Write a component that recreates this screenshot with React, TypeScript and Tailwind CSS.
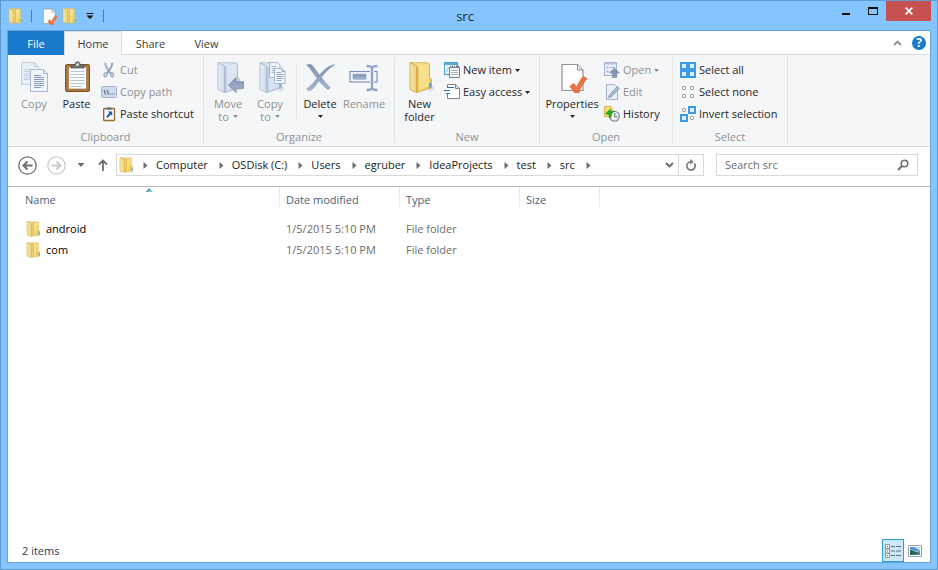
import type { ReactNode } from "react";

type IconProps = { className?: string };

const BREADCRUMBS = [
  "Computer",
  "OSDisk (C:)",
  "Users",
  "egruber",
  "IdeaProjects",
  "test",
  "src",
];

const FILES = [
  { name: "android", modified: "1/5/2015 5:10 PM", type: "File folder" },
  { name: "com", modified: "1/5/2015 5:10 PM", type: "File folder" },
];

/* ---------- icons ---------- */

function Gradients() {
  return (
    <svg className="absolute h-0 w-0" aria-hidden="true">
      <defs>
        <linearGradient id="gold" x1="0" y1="0" x2="1" y2="1">
          <stop offset="0" stopColor="#f9e7a0" />
          <stop offset="0.6" stopColor="#f3d974" />
          <stop offset="1" stopColor="#e0b53c" />
        </linearGradient>
        <linearGradient id="goldLeaf" x1="0" y1="0" x2="1" y2="0">
          <stop offset="0" stopColor="#f9e9a8" />
          <stop offset="1" stopColor="#ecd079" />
        </linearGradient>
        <linearGradient id="ice" x1="0" y1="0" x2="1" y2="1">
          <stop offset="0" stopColor="#eaf0f8" />
          <stop offset="1" stopColor="#b9c9e0" />
        </linearGradient>
        <linearGradient id="iceLeaf" x1="0" y1="0" x2="1" y2="0">
          <stop offset="0" stopColor="#ecf2fa" />
          <stop offset="1" stopColor="#cbd8e9" />
        </linearGradient>
        <linearGradient id="steel" x1="0" y1="0" x2="0" y2="1">
          <stop offset="0" stopColor="#8193b3" />
          <stop offset="1" stopColor="#a9b8d2" />
        </linearGradient>
      </defs>
    </svg>
  );
}

function SmallFolderIcon({ className = "h-4 w-4" }: IconProps) {
  return (
    <svg viewBox="0 0 16 16" className={className} aria-hidden="true">
      <path d="M1 .8h11.300v8l1.400.7v4.300l-1.200 1H6z" fill="#f1da85" stroke="#dcbb58" strokeWidth=".6" />
      <path d="m8 2.500 4-1v12l-4 1.500z" fill="url(#gold)" />
      <path d="m1 .8 4.700 1.800v13L1 14z" fill="url(#goldLeaf)" stroke="#d8b553" strokeWidth=".6" />
      <path d="M5.700 2.600 8 2v12.800l-2.300.8z" fill="#dcb447" />
      <path d="M6.800 3v11.500" stroke="#f6e39a" strokeWidth=".8" />
      <path d="M12.700 10.800h1v3l-1 .6z" fill="#4aa3e8" />
    </svg>
  );
}

function FolderIcon({ cold = false }: { cold?: boolean }) {
  const edge = cold ? "#a9b8d2" : "#d3aa45";
  return (
    <svg viewBox="0 0 32 32" className="h-8 w-8" aria-hidden="true">
      <path d="m24 31 6-2v-3l-3-3z" fill="#888" opacity=".2" />
      <path
        d="M6 1.800h16.500q3 0 3 2.500V16l2 2.500v8L13 31.500z"
        fill={cold ? "url(#ice)" : "url(#gold)"}
        stroke={edge}
        strokeWidth=".9"
      />
      <path
        d="M14 6.500 20 3.500q2.500-.5 4.500 0l.5 22-11 5z"
        fill={cold ? "#dfe8f4" : "#f8e391"}
        opacity=".75"
      />
      <path
        d="m6 1.800 6.500 3V31.500L6 28.500z"
        fill={cold ? "url(#iceLeaf)" : "url(#goldLeaf)"}
        stroke={edge}
        strokeWidth=".9"
      />
      <path d="m12.800 5 1.700 1.500v23.500l-1.700 1.300z" fill={cold ? "#b5c4dc" : "#dcb447"} />
      <path d="M25.300 22h1.700v4l-1.700 2z" fill={cold ? "#8fabd3" : "#3f9ce5"} />
    </svg>
  );
}

function MoveToIcon() {
  return (
    <span className="relative block h-8 w-8">
      <FolderIcon cold />
      <svg viewBox="0 0 32 32" className="absolute inset-0 h-8 w-8" aria-hidden="true">
        <path
          d="m16.500 24 7.500-7.500v4.300h7.500v6.500H24v4.300z"
          fill="url(#steel)"
          stroke="#73829f"
          strokeWidth=".8"
        />
      </svg>
    </span>
  );
}

function CopyToIcon() {
  return (
    <span className="relative block h-8 w-8">
      <FolderIcon cold />
      <svg viewBox="0 0 32 32" className="absolute inset-0 h-8 w-8" aria-hidden="true">
        <path d="M15.500 1.500h7.500l3 3v12H15.500z" fill="#f3f7fc" stroke="#a3b4d0" />
        <path d="M17.500 5.500h5m-5 2h5m-5 2h5m-5 2h5" stroke="#a3b4d0" />
        <path d="M20.500 7.500h7.500l3 3v12H20.500z" fill="#f5f8fd" stroke="#a3b4d0" />
        <path d="M28 7.500v3h3M22.500 11.500h5m-5 2h7m-7 2h7m-7 2h7m-7 2h5" fill="none" stroke="#93a7c9" />
      </svg>
    </span>
  );
}

function CopyIcon() {
  return (
    <svg viewBox="0 0 32 32" className="h-8 w-8" aria-hidden="true" fill="none">
      <path d="M3.500 1.500h13l4 4v18h-17z" fill="#eaf0f9" stroke="#c0cce0" />
      <path d="M16.500 1.500v4h4M6 8.500h9m-9 2h9m-9 2h9m-9 2h9m-9 2h9m-9 2h9" stroke="#c0cce0" />
      <path d="M12.500 8.500h13l4 4v18h-17z" fill="#f0f5fc" stroke="#a9b8d1" />
      <path d="M25.500 8.500v4h4" stroke="#a9b8d1" />
      <path d="M16 14.500h7m-7 2h10m-10 2h10m-10 2h10m-10 2h10m-10 2h10m-10 2h7" stroke="#8a9dc0" />
    </svg>
  );
}

function PasteIcon() {
  return (
    <svg viewBox="0 0 32 32" className="h-8 w-8" aria-hidden="true" fill="none">
      <rect x="4.500" y="3.500" width="24" height="27" rx="1.500" fill="#b0783a" stroke="#815121" />
      <path d="M7.500 6h18v22h-18z" fill="#fbfcfd" stroke="#8c6a41" strokeWidth=".6" />
      <path d="M9.500 10.500h14m-14 3h14m-14 3h14m-14 3h14m-14 3h14m-14 3h11" stroke="#b6c4d3" />
      <path d="M10 7V5l4-1.500C14 1.800 15 .8 16.500.8s2.500 1 2.500 2.700L23 5v2z" fill="#72777c" stroke="#45494d" strokeWidth=".7" />
      <circle cx="16.500" cy="3.500" r="1.300" fill="#f5f6f7" />
    </svg>
  );
}

function CutIcon() {
  return (
    <svg viewBox="0 0 16 16" className="h-4 w-4" aria-hidden="true" fill="none">
      <path d="M4.500.8C4 3 5 5 6.500 7l3 4.500" stroke="#a2b0c9" strokeWidth="2" />
      <path d="M11 .8c.5 2.200-.5 4.200-2 6.200l-3 4.500" stroke="#8899b8" strokeWidth="1.800" />
      <ellipse cx="4.500" cy="12.800" rx="1.300" ry="2" transform="rotate(20 4.500 12.800)" stroke="#9aabc8" strokeWidth="1.500" />
      <ellipse cx="11" cy="12.800" rx="1.300" ry="2" transform="rotate(-20 11 12.800)" stroke="#9aabc8" strokeWidth="1.500" />
    </svg>
  );
}

function CopyPathIcon() {
  return (
    <svg viewBox="0 0 16 16" className="h-4 w-4" aria-hidden="true" fill="none">
      <rect x=".5" y="2.500" width="15" height="11" rx="1" fill="#cfdbed" stroke="#a2b2cd" />
      <path d="m3 6 1.500 4.500M6 6l1.500 4.500" stroke="#5d7096" strokeWidth="1.200" />
      <path d="M9 9.500h1v1H9zm2 0h1v1h-1zm2 0h1v1h-1z" fill="#5d7096" />
    </svg>
  );
}

function PasteShortcutIcon() {
  return (
    <svg viewBox="0 0 16 16" className="h-4 w-4" aria-hidden="true" fill="none">
      <rect x="2.700" y="2.500" width="10.800" height="12" rx=".8" fill="#fff" stroke="#9a6a33" strokeWidth="1.400" />
      <path d="M5 3.800V2l2-.5c0-.8 2-.8 2 0l2 .5v1.800z" fill="#777" />
      <path d="M6.800 5.500h4.400v4.400L9.700 8.500 7 12 5.200 10.500 8.200 7.100z" fill="#1f5fb0" />
    </svg>
  );
}

function DeleteIcon() {
  return (
    <svg viewBox="0 0 32 32" className="h-8 w-8" aria-hidden="true" fill="url(#steel)" stroke="#7f90ae" strokeWidth=".5">
      <path d="M2.500 4.200C4.500 3 7 3 8.500 4.800 14 11.500 19 19.500 26.300 26.800l-2.300 2C16.500 23 11 14.500 6.500 8 5.300 6.300 4.200 5 2.500 4.200z" />
      <path d="M30.800 3.800C24.500 4.300 19 9.500 14.500 15.500 11 20 7.500 24.500 3 27.800c.3 1.500 1.500 2.200 3.200 1.700C10 28 13 22.500 16.500 17.500 20.500 12 25 7 30.800 3.800z" />
    </svg>
  );
}

function RenameIcon() {
  return (
    <svg viewBox="0 0 32 32" className="h-8 w-8" aria-hidden="true" fill="none">
      <rect x="2" y="10.500" width="27" height="10.500" fill="#f3f7fd" stroke="#8195b9" strokeWidth="1.200" />
      <path d="M5 13.200h13v5H5z" fill="url(#steel)" stroke="#8093b5" strokeWidth=".6" />
      <path
        d="M18.500 5c3.500 0 5 .5 5.500 2 .5-1.500 2-2 5.500-2M18.500 29c3.500 0 5-.5 5.500-2 .5 1.500 2 2 5.500 2M24 6.500v21"
        stroke="#f5f8fc"
        strokeWidth="4"
      />
      <path
        d="M18.500 5c3.500 0 5 .5 5.500 2 .5-1.500 2-2 5.500-2M18.500 29c3.500 0 5-.5 5.500-2 .5 1.500 2 2 5.500 2M24 6.500v21"
        stroke="#94a5c3"
        strokeWidth="2.400"
      />
    </svg>
  );
}

function PropertiesIcon({ className = "h-8 w-8" }: IconProps) {
  return (
    <svg viewBox="0 0 32 32" className={className} aria-hidden="true">
      <path d="M6 3.500h15.500l5.500 5.500v20.500H6z" fill="#fdfdfd" stroke="#8f9499" strokeWidth="1.200" />
      <path d="M21.500 3.500V9H27" fill="#e4e6e8" stroke="#8f9499" />
      <path
        d="m14 25.500 3.500-3 3.300 3.500c1.500-4 3.700-7.500 6.700-10.500l3.500 2.300c-4 4-6.500 8.200-8 13.700h-4.500z"
        fill="#ee7440"
        stroke="#d8602c"
        strokeWidth=".8"
      />
    </svg>
  );
}

function NewItemIcon() {
  return (
    <svg viewBox="0 0 16 16" className="h-4 w-4" aria-hidden="true" fill="none">
      <rect x=".5" y=".5" width="13" height="12" fill="#eaf5fd" stroke="#4e9fd2" />
      <path d="M1 1h12v2H1z" fill="#5aaade" />
      <path d="M2 10.500c1-3 2-4 3-5" stroke="#78b9e2" />
      <path d="M5.500 5.500h10v10h-10z" fill="#fff" stroke="#777d83" />
      <path d="M6.500 3.500v2m2-2v2m2-2v2m2-2v2m2-2v2" stroke="#777d83" />
      <path d="M7 8.500h7m-7 2h7m-7 2h7" stroke="#a9b0b7" />
    </svg>
  );
}

function EasyAccessIcon() {
  return (
    <svg viewBox="0 0 16 16" className="h-4 w-4" aria-hidden="true" fill="none">
      <path d="M3.500.5h8l4 4v10h-12z" fill="#fff" />
      <path d="M3.500 3V.5h8l4 4v10h-12V10M11.500.5v4h4" stroke="#7e8489" />
      <path d="M3 3.500h7M0 6.500h6M2 9.500h4" stroke="#2e67b1" strokeWidth="1.200" />
    </svg>
  );
}

function OpenIcon() {
  return (
    <svg viewBox="0 0 16 16" className="h-4 w-4" aria-hidden="true" fill="none">
      <rect x=".5" y=".5" width="12" height="13" fill="#e9f0f9" stroke="#a5b5cf" />
      <path d="M1 1h11v1.500H1z" fill="#b8c6dc" />
      <path d="M2.500 4.500h2v2h-2zm0 4h2v2h-2z" fill="#a5b5cf" />
      <path d="M6 5.500h5m-5 4h2" stroke="#a5b5cf" />
      <path d="m10.500 6 5 5h-2.800v4.500H8.300V11H5.500z" fill="#8494b1" stroke="#7384a3" strokeWidth=".5" />
    </svg>
  );
}

function EditIcon() {
  return (
    <svg viewBox="0 0 16 16" className="h-4 w-4" aria-hidden="true" fill="none">
      <path d="M2.500.5h8l3 3v12h-11z" fill="#e9f0f9" stroke="#a5b5cf" />
      <path d="m4.500 14 1-3.200 7.800-8.300 2 1.800-7.800 8.400z" fill="#a9bad5" stroke="#8092b3" strokeWidth=".8" />
    </svg>
  );
}

function HistoryIcon() {
  return (
    <svg viewBox="0 0 16 16" className="h-4 w-4" aria-hidden="true" fill="none">
      <path d="M.5.500h6.500l1 1v9H.500z" fill="#f7dc78" stroke="#d9b04a" />
      <circle cx="10.500" cy="10.300" r="4.900" fill="#eef3f8" stroke="#858b92" strokeWidth="1.200" />
      <path d="M10.700 7v3.800h3" stroke="#666c73" />
      <path d="M1.500 7.500 6.500 3v2.500c1.500-.8 3-.8 4 0-2 .5-3.200 2-3.500 6L5.500 12V9.500z" fill="#2fae28" stroke="#168a17" strokeWidth=".5" />
    </svg>
  );
}

const TILES = [
  [0, 0],
  [8, 0],
  [0, 8],
  [8, 8],
];

function TilesIcon({ selected }: { selected: boolean[] }) {
  return (
    <svg viewBox="0 0 16 16" className="h-4 w-4" aria-hidden="true" fill="none">
      {TILES.map(([x, y], i) =>
        selected[i] ? (
          <g key={i}>
            <rect x={x} y={y} width="8" height="8" fill="#3d9be9" />
            <rect x={x + 2} y={y + 2} width="4" height="4" fill="#dceefc" />
          </g>
        ) : (
          <rect key={i} x={x + 2.5} y={y + 2.5} width="3" height="3" rx=".5" fill="#fff" stroke="#9c9fa2" />
        ),
      )}
    </svg>
  );
}

function Caret({ className = "" }: IconProps) {
  return (
    <svg viewBox="0 0 5 3" className={`h-[3px] w-[5px] shrink-0 ${className}`} aria-hidden="true">
      <path d="M0 0h5L2.500 3z" fill="currentColor" />
    </svg>
  );
}

/* ---------- ribbon ---------- */

type SmallButtonProps = {
  icon: ReactNode;
  label: string;
  disabled?: boolean;
  menu?: boolean;
};

type LargeButtonProps = {
  icon: ReactNode;
  lines: string[];
  disabled?: boolean;
  menu?: boolean;
  className: string;
};

function LargeButton({ icon, lines, disabled, menu, className }: LargeButtonProps) {
  return (
    <button
      type="button"
      disabled={disabled}
      className={`flex flex-col items-center text-[#262626] disabled:text-[#8c8f93] ${className}`}
    >
      {icon}
      <span className="mt-1 flex flex-col items-center leading-[13px]">
        {lines.map((line, i) => (
          <span key={line} className="flex items-center gap-1 whitespace-nowrap">
            {line}
            {menu && i > 0 ? <Caret /> : null}
          </span>
        ))}
        {menu && lines.length === 1 ? <Caret className="mt-[5px]" /> : null}
      </span>
    </button>
  );
}

function SmallButton({ icon, label, disabled, menu }: SmallButtonProps) {
  return (
    <button
      type="button"
      disabled={disabled}
      className="flex h-[22px] items-center gap-[3px] whitespace-nowrap text-[#262626] disabled:text-[#8c8f93]"
    >
      {icon}
      <span>{label}</span>
      {menu ? <Caret /> : null}
    </button>
  );
}

function Group({
  title,
  className,
  children,
}: {
  title: string;
  className: string;
  children: ReactNode;
}) {
  return (
    <section
      aria-label={title}
      className={`flex shrink-0 flex-col border-[#e2e3e4] border-r ${className}`}
    >
      <div className="flex flex-1 pt-1">{children}</div>
      <h2 className="text-center text-[#8f9296] leading-3">{title}</h2>
    </section>
  );
}

function Ribbon() {
  return (
    <div className="flex h-[92px] overflow-hidden border-[#dadbdc] border-b bg-[#f5f6f7] pt-[2px] pb-[3px]">
      <Group title="Clipboard" className="w-[196px]">
        <LargeButton icon={<CopyIcon />} lines={["Copy"]} disabled className="ml-[5px] w-[42px]" />
        <LargeButton icon={<PasteIcon />} lines={["Paste"]} className="w-[43px]" />
        <div className="-mt-[2px] ml-[3px] flex flex-col">
          <SmallButton icon={<CutIcon />} label="Cut" disabled />
          <SmallButton icon={<CopyPathIcon />} label="Copy path" disabled />
          <SmallButton icon={<PasteShortcutIcon />} label="Paste shortcut" />
        </div>
      </Group>

      <Group title="Organize" className="w-[191px]">
        <LargeButton icon={<MoveToIcon />} lines={["Move", "to"]} disabled menu className="ml-[3px] w-[42px]" />
        <LargeButton icon={<CopyToIcon />} lines={["Copy", "to"]} disabled menu className="w-[42px]" />
        <div className="mt-[3px] mr-[3px] ml-[5px] h-14 w-px bg-[#e2e3e4]" />
        <LargeButton icon={<DeleteIcon />} lines={["Delete"]} menu className="w-[40px]" />
        <LargeButton icon={<RenameIcon />} lines={["Rename"]} disabled className="w-[48px]" />
      </Group>

      <Group title="New" className="w-[145px]">
        <LargeButton icon={<FolderIcon />} lines={["New", "folder"]} className="ml-[3px] w-[43px]" />
        <div className="-mt-[2px] ml-[3px] flex flex-col">
          <SmallButton icon={<NewItemIcon />} label="New item" menu />
          <SmallButton icon={<EasyAccessIcon />} label="Easy access" menu />
        </div>
      </Group>

      <Group title="Open" className="w-[133px]">
        <LargeButton icon={<PropertiesIcon />} lines={["Properties"]} menu className="ml-1 w-[56px]" />
        <div className="-mt-[2px] ml-1 flex flex-col">
          <SmallButton icon={<OpenIcon />} label="Open" disabled menu />
          <SmallButton icon={<EditIcon />} label="Edit" disabled />
          <SmallButton icon={<HistoryIcon />} label="History" />
        </div>
      </Group>

      <Group title="Select" className="w-[115px]">
        <div className="-mt-[2px] ml-[7px] flex flex-col">
          <SmallButton icon={<TilesIcon selected={[true, true, true, true]} />} label="Select all" />
          <SmallButton icon={<TilesIcon selected={[false, false, false, false]} />} label="Select none" />
          <SmallButton icon={<TilesIcon selected={[false, true, true, false]} />} label="Invert selection" />
        </div>
      </Group>
    </div>
  );
}

/* ---------- window chrome ---------- */

function TitleBar() {
  return (
    <header className="grid h-[29px] grid-cols-[1fr_auto_1fr]">
      <div className="flex items-center pl-px">
        <SmallFolderIcon />
        <span className="mx-[7px] h-3 w-px bg-[#4c7ba5]" />
        <button type="button" aria-label="Properties" className="ml-px">
          <PropertiesIcon className="h-[18px] w-[18px]" />
        </button>
        <button type="button" aria-label="New folder" className="ml-1">
          <SmallFolderIcon />
        </button>
        <button type="button" aria-label="Customize Quick Access Toolbar" className="ml-2">
          <svg viewBox="0 0 8 6" className="h-[6px] w-2" aria-hidden="true">
            <path d="M.5 0h7v1h-7zM.5 2.500h7L4 6z" fill="#111" />
          </svg>
        </button>
        <span className="mx-[9px] h-3 w-px bg-[#4c7ba5]" />
      </div>
      <h1 className="pr-2 text-[#1c2630] text-[13px] leading-[30px]">src</h1>
      <div className="flex items-start justify-end">
        <button type="button" aria-label="Minimize" className="flex h-5 w-[27px] items-center justify-center">
          <span className="mt-[5px] h-[2px] w-2 bg-[#111]" />
        </button>
        <button type="button" aria-label="Maximize" className="flex h-5 w-[27px] items-center justify-center">
          <span className="h-2 w-[10px] border border-[#111] border-t-2" />
        </button>
        <button type="button" aria-label="Close" className="flex h-5 w-[45px] items-center justify-center bg-[#c75050]">
          <svg viewBox="0 0 8 8" className="h-2 w-2" aria-hidden="true">
            <path d="m.7.700 6.600 6.600m0-6.600L.7 7.300" stroke="#fff" strokeWidth="1.700" />
          </svg>
        </button>
      </div>
    </header>
  );
}

function Tabs() {
  return (
    <nav aria-label="Ribbon tabs" className="flex h-6 items-stretch bg-white text-[#3b3b3b]">
      <button type="button" className="w-14 bg-[#1979ca] pt-px text-white">
        File
      </button>
      <button type="button" className="w-[58px] border-[#dadbdc] border-x border-t bg-[#f5f6f7] pt-px">
        Home
      </button>
      <div className="flex flex-1 items-stretch border-[#dadbdc] border-b">
        <button type="button" className="w-[57px] pt-[2px]">
          Share
        </button>
        <button type="button" className="w-[55px] pt-[2px]">
          View
        </button>
        <div className="ml-auto flex items-center gap-[10px] pr-1">
          <button type="button" aria-label="Minimize the Ribbon">
            <svg viewBox="0 0 9 6" className="h-[6px] w-[9px]" aria-hidden="true">
              <path d="m1 5 3.500-3.500L8 5" fill="none" stroke="#8b8f94" strokeWidth="1.800" />
            </svg>
          </button>
          <button
            type="button"
            aria-label="Help"
            className="flex h-[14px] w-[14px] items-center justify-center rounded-full bg-[#1979ca] font-bold text-[12px] text-white"
          >
            ?
          </button>
        </div>
      </div>
    </nav>
  );
}

function ArrowCircle({ direction }: { direction: "back" | "forward" }) {
  const back = direction === "back";
  return (
    <svg
      viewBox="0 0 19 19"
      className="h-[19px] w-[19px]"
      aria-hidden="true"
      fill="none"
      stroke={back ? "#6f6f6f" : "#cbcbcb"}
    >
      <circle cx="9.500" cy="9.500" r="8.700" strokeWidth="1.300" />
      <path
        d={back ? "M14.500 9.500H5.500m4-4-4 4 4 4" : "M4.500 9.500h9m-4-4 4 4-4 4"}
        strokeWidth="2"
      />
    </svg>
  );
}

function BreadcrumbArrow() {
  return (
    <svg viewBox="0 0 5 7" className="h-[7px] w-[5px]" aria-hidden="true">
      <path d="M.5 0v7l4-3.500z" fill="#6f6f6f" />
    </svg>
  );
}

function AddressBar() {
  return (
    <div className="flex h-10 items-center border-[#b4b5b6] border-b bg-white pr-3 pb-[3px] pl-[10px]">
      <button type="button" aria-label="Back">
        <ArrowCircle direction="back" />
      </button>
      <button type="button" aria-label="Forward" className="ml-[10px]">
        <ArrowCircle direction="forward" />
      </button>
      <button type="button" aria-label="Recent locations" className="ml-[11px] text-[#6a6a6a]">
        <svg viewBox="0 0 8 4" className="h-1 w-2" aria-hidden="true">
          <path d="M.5 0h7L4 4z" fill="currentColor" />
        </svg>
      </button>
      <button type="button" aria-label="Up" className="ml-[13px]">
        <svg viewBox="0 0 10 12" className="h-3 w-[10px]" aria-hidden="true" fill="none" stroke="#6f6f6f">
          <path d="M5 12V1.500M1 5.500l4-4 4 4" strokeWidth="1.800" />
        </svg>
      </button>

      <div className="ml-2 flex h-[22px] min-w-0 flex-1 items-center border border-[#d9d9d9]">
        <span className="mr-2 ml-[2px]">
          <SmallFolderIcon />
        </span>
        <ol className="flex items-center text-[#1a1a1a]">
          <li className="flex">
            <BreadcrumbArrow />
          </li>
          {BREADCRUMBS.map((crumb) => (
            <li key={crumb} className="flex items-center whitespace-nowrap">
              <a href="#" className="mr-[11px] ml-2">
                {crumb}
              </a>
              <BreadcrumbArrow />
            </li>
          ))}
        </ol>
        <button type="button" aria-label="Previous locations" className="ml-auto px-1">
          <svg viewBox="0 0 9 6" className="h-[6px] w-[9px]" aria-hidden="true">
            <path d="m1 1 3.500 3.500L8 1" fill="none" stroke="#666" strokeWidth="1.800" />
          </svg>
        </button>
        <button
          type="button"
          aria-label="Refresh"
          className="flex h-full w-[25px] items-center justify-center border-[#d9d9d9] border-l"
        >
          <svg viewBox="0 0 12 12" className="h-3 w-3" aria-hidden="true">
            <path d="M9.300 4.200A4.200 4.200 0 1 1 5.500 2.700" fill="none" stroke="#777" strokeWidth="1.600" />
            <path d="M5.200 0 8.700 2.700 5.200 5.400z" fill="#777" />
          </svg>
        </button>
      </div>

      <div className="ml-3 flex h-[22px] w-[202px] items-center border border-[#d9d9d9] pr-2 pl-2">
        <input
          type="search"
          aria-label="Search src"
          placeholder="Search src"
          className="min-w-0 flex-1 bg-transparent outline-none placeholder:text-[#6d6d6d]"
        />
        <svg viewBox="0 0 12 12" className="h-3 w-3 shrink-0" aria-hidden="true" fill="none" stroke="#6f6f6f">
          <circle cx="7.500" cy="4.500" r="3.300" strokeWidth="1.600" />
          <path d="m5.200 6.800-4.200 4.200" strokeWidth="2" />
        </svg>
      </div>
    </div>
  );
}

/* ---------- file list ---------- */

const headCell = "block h-5 border-[#e4ecf7] border-r pt-[5px] pl-[6px] leading-4";

function FileList() {
  return (
    <table className="w-[592px] table-fixed border-collapse text-left">
      <colgroup>
        <col className="w-[272px]" />
        <col className="w-[120px]" />
        <col className="w-[120px]" />
        <col className="w-[80px]" />
      </colgroup>
      <thead className="text-[#4c607a]">
        <tr className="h-[31px] align-top">
          <th scope="col" aria-sort="ascending" className="relative p-0 font-normal">
            <span className="block h-5 border-[#e4ecf7] border-r pt-[5px] pl-[17px] leading-4">Name</span>
            <svg viewBox="0 0 7 4" className="absolute top-px left-[138px] h-1 w-[7px]" aria-hidden="true">
              <path d="M3.500 0 7 4H0z" fill="#86bcd8" />
              <path d="M3.500 0v1L1 4H0z" fill="#2f6484" />
            </svg>
          </th>
          <th scope="col" className="p-0 font-normal">
            <span className={headCell}>Date modified</span>
          </th>
          <th scope="col" className="p-0 font-normal">
            <span className={headCell}>Type</span>
          </th>
          <th scope="col" className="p-0 font-normal">
            <span className={headCell}>Size</span>
          </th>
        </tr>
      </thead>
      <tbody className="text-[#6d6d6d]">
        {FILES.map((file) => (
          <tr key={file.name} className="h-[21px]">
            <td className="p-0 text-black">
              <span className="flex items-center gap-1 pl-[18px]">
                <SmallFolderIcon />
                {file.name}
              </span>
            </td>
            <td className="p-0 pl-[6px]">{file.modified}</td>
            <td className="p-0 pl-[6px]">{file.type}</td>
            <td />
          </tr>
        ))}
      </tbody>
    </table>
  );
}

function StatusBar() {
  return (
    <footer className="mt-auto flex h-[23px] items-center pr-2 pl-[14px] text-[#1e395b]">
      <span>{FILES.length} items</span>
      <button
        type="button"
        aria-label="Details view"
        className="ml-auto flex h-[23px] w-[22px] items-center justify-center border border-[#2a9fd6] bg-[#cbe8f6]"
      >
        <svg viewBox="0 0 16 14" className="h-[14px] w-4" aria-hidden="true" fill="none">
          <path d="M.5.500h4v4h-4zm0 4.500h4v4h-4zm0 4.500h4v4h-4z" fill="#fff" stroke="#8a94a3" />
          <path d="M2 2h1v1H2z" fill="#2a9a2a" />
          <path d="M2 6.500h1v1H2z" fill="#e02020" />
          <path d="M2 11h1v1H2z" fill="#2a62d0" />
          <path d="M6 2.500h4m1 0h5m-10 4.500h4m1 0h5m-10 4.500h4m1 0h5" stroke="#5c6b7d" />
        </svg>
      </button>
      <button type="button" aria-label="Large icons view" className="ml-1">
        <svg viewBox="0 0 14 12" className="h-3 w-[14px]" aria-hidden="true">
          <path d="M.5.500h13v11H.5z" fill="#fff" stroke="#98a2b0" />
          <path d="M2 2h10v8H2z" fill="#b7dbf5" />
          <path d="M2 2h4l6 4v1L2 4.500z" fill="#4f93d3" />
          <path d="M2 5c3 0 4 2 10 2.500V10H2z" fill="#2f6350" />
          <path d="M5 9.500 12 8v2H5z" fill="#4b86b8" />
        </svg>
      </button>
    </footer>
  );
}

export default function App() {
  return (
    <div className="flex min-h-screen flex-col border border-[#5e9bcf] bg-[#84c5ff] px-[6px] pb-[6px] font-['Open_Sans','Noto_Sans',sans-serif] text-[11px] leading-4">
      <Gradients />
      <TitleBar />
      <main className="flex flex-1 flex-col border border-[#65a4d8] bg-white">
        <Tabs />
        <Ribbon />
        <AddressBar />
        <FileList />
        <StatusBar />
      </main>
    </div>
  );
}
